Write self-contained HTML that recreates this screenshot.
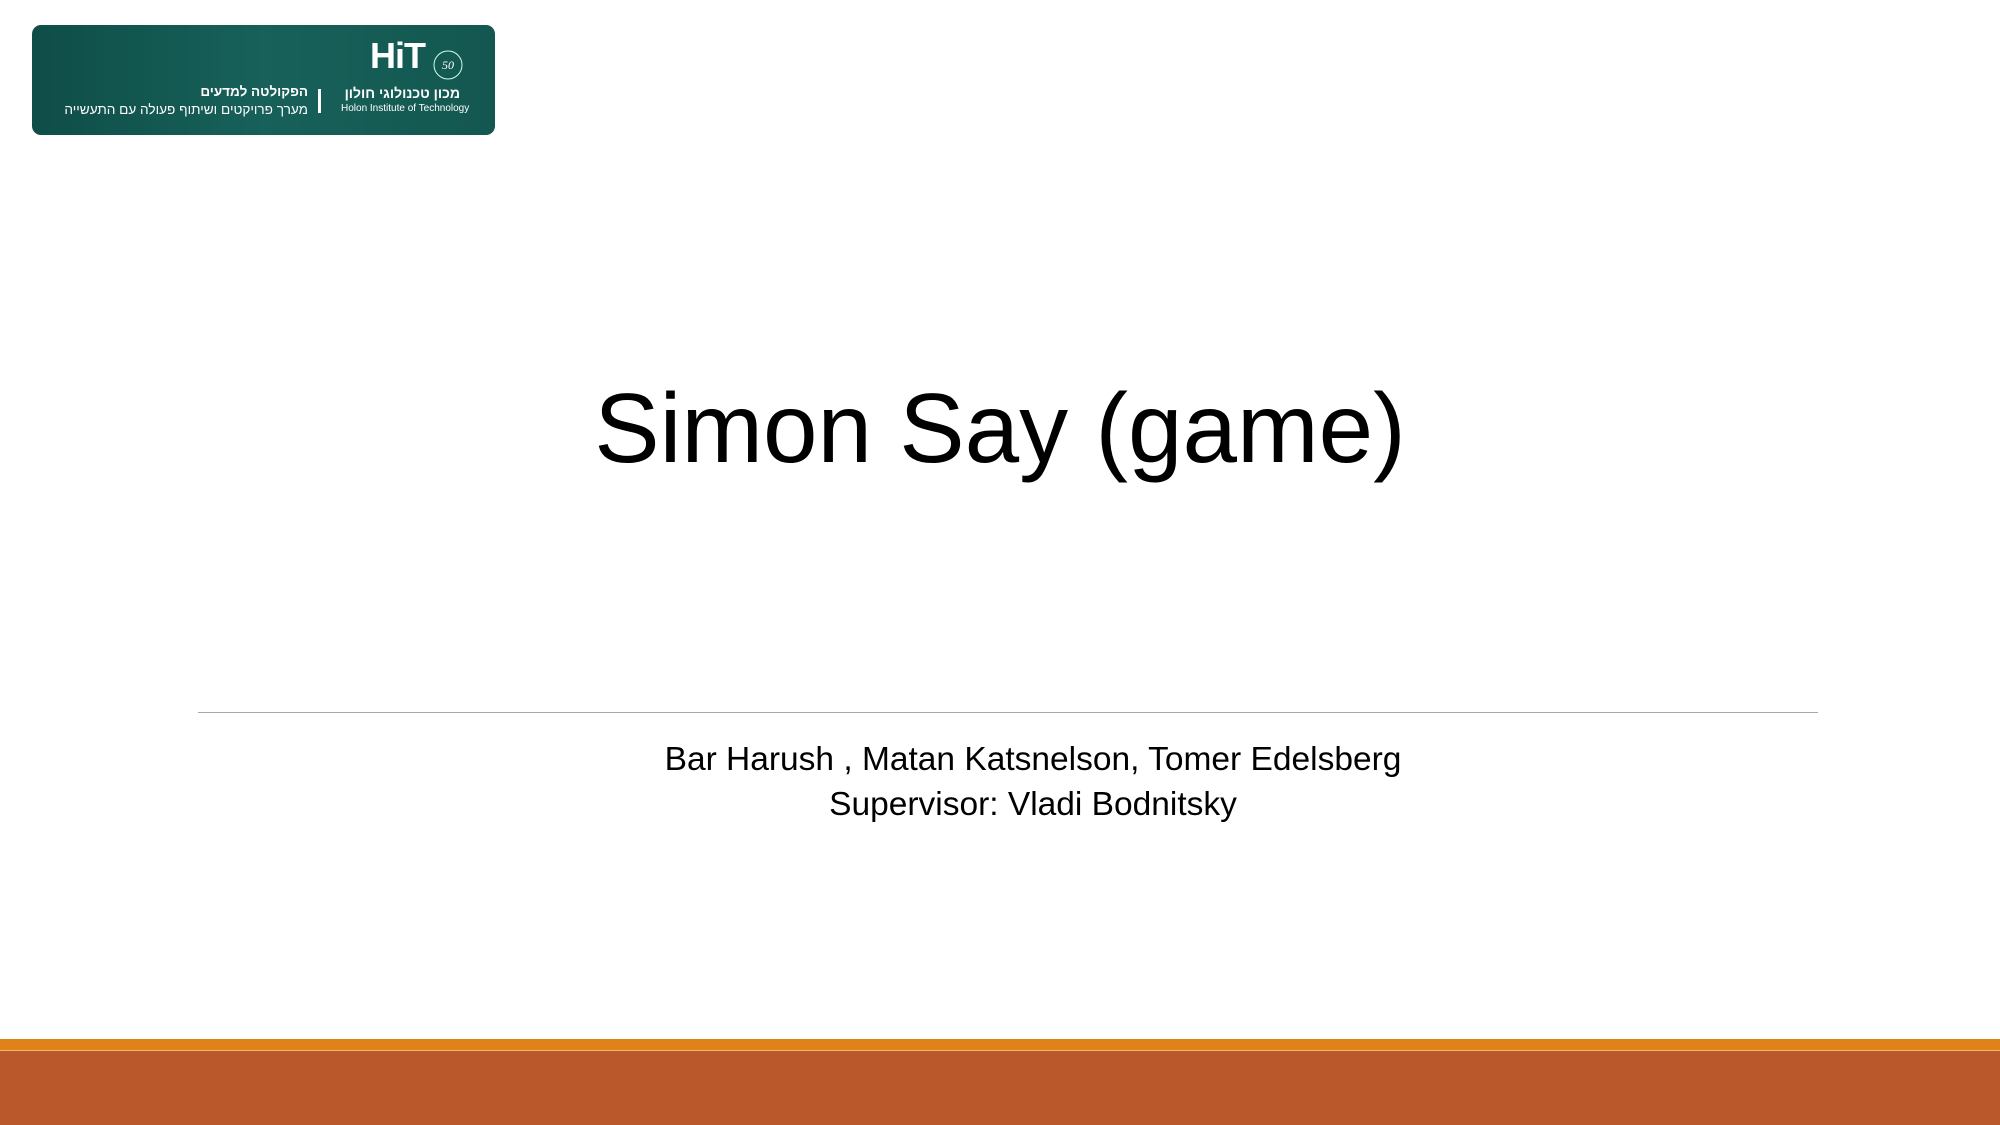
<!DOCTYPE html>
<html><head><meta charset="utf-8"><style>
body{margin:0;width:2000px;height:1125px;position:relative;overflow:hidden;background:#fff;font-family:"Liberation Sans","Noto Sans CJK SC",sans-serif;}
.logo{position:absolute;left:32px;top:25px;width:463px;height:110px;border-radius:9px;background:linear-gradient(90deg,#0f4d48,#17615a 50%,#135750);}
.t{position:absolute;color:#fff;white-space:nowrap;}
h1{position:absolute;left:0;width:2000px;top:368px;margin:0;text-align:center;font-weight:normal;font-size:98px;line-height:120px;color:#000;}
.line{position:absolute;left:198px;width:1620px;top:712px;height:1px;background:#a8a8a8;}
.sub{position:absolute;left:33px;width:2000px;top:737px;text-align:center;font-size:33.5px;line-height:45px;color:#000;}
.o{position:absolute;left:0;top:1039px;width:2000px;height:11px;background:#e0821a;}
.r{position:absolute;left:0;top:1050px;width:2000px;height:75px;background:#ba572b;border-top:1px solid #f2b46a;box-sizing:border-box;}
</style></head><body>
<div class="logo">
 <div class="t" style="left:338px;top:10px;font-size:36px;font-weight:bold;letter-spacing:-1px;">HiT</div>
 <svg style="position:absolute;left:400px;top:24px" width="32" height="32"><circle cx="16" cy="16" r="14" fill="none" stroke="#cfe" stroke-width="1"/><text x="16" y="20" font-size="12" font-style="italic" fill="#fff" text-anchor="middle" font-family="Liberation Serif">50</text></svg>
 <div class="t" dir="rtl" style="right:35px;top:60px;font-size:14px;font-weight:bold;">מכון טכנולוגי חולון</div>
 <div class="t" style="left:309px;top:78px;font-size:10px;">Holon Institute of Technology</div>
 <div style="position:absolute;left:286px;top:64px;width:3px;height:24px;background:#fff"></div>
 <div class="t" dir="rtl" style="right:187px;top:59px;font-size:13.5px;font-weight:bold;">הפקולטה למדעים</div>
 <div class="t" dir="rtl" style="right:187px;top:77px;font-size:13.6px;">מערך פרויקטים ושיתוף פעולה עם התעשייה</div>
</div>
<h1>Simon Say (game)</h1>
<div class="line"></div>
<div class="sub">Bar Harush , Matan Katsnelson, Tomer Edelsberg<br>Supervisor: Vladi Bodnitsky</div>
<div class="o"></div><div class="r"></div>
</body></html>
